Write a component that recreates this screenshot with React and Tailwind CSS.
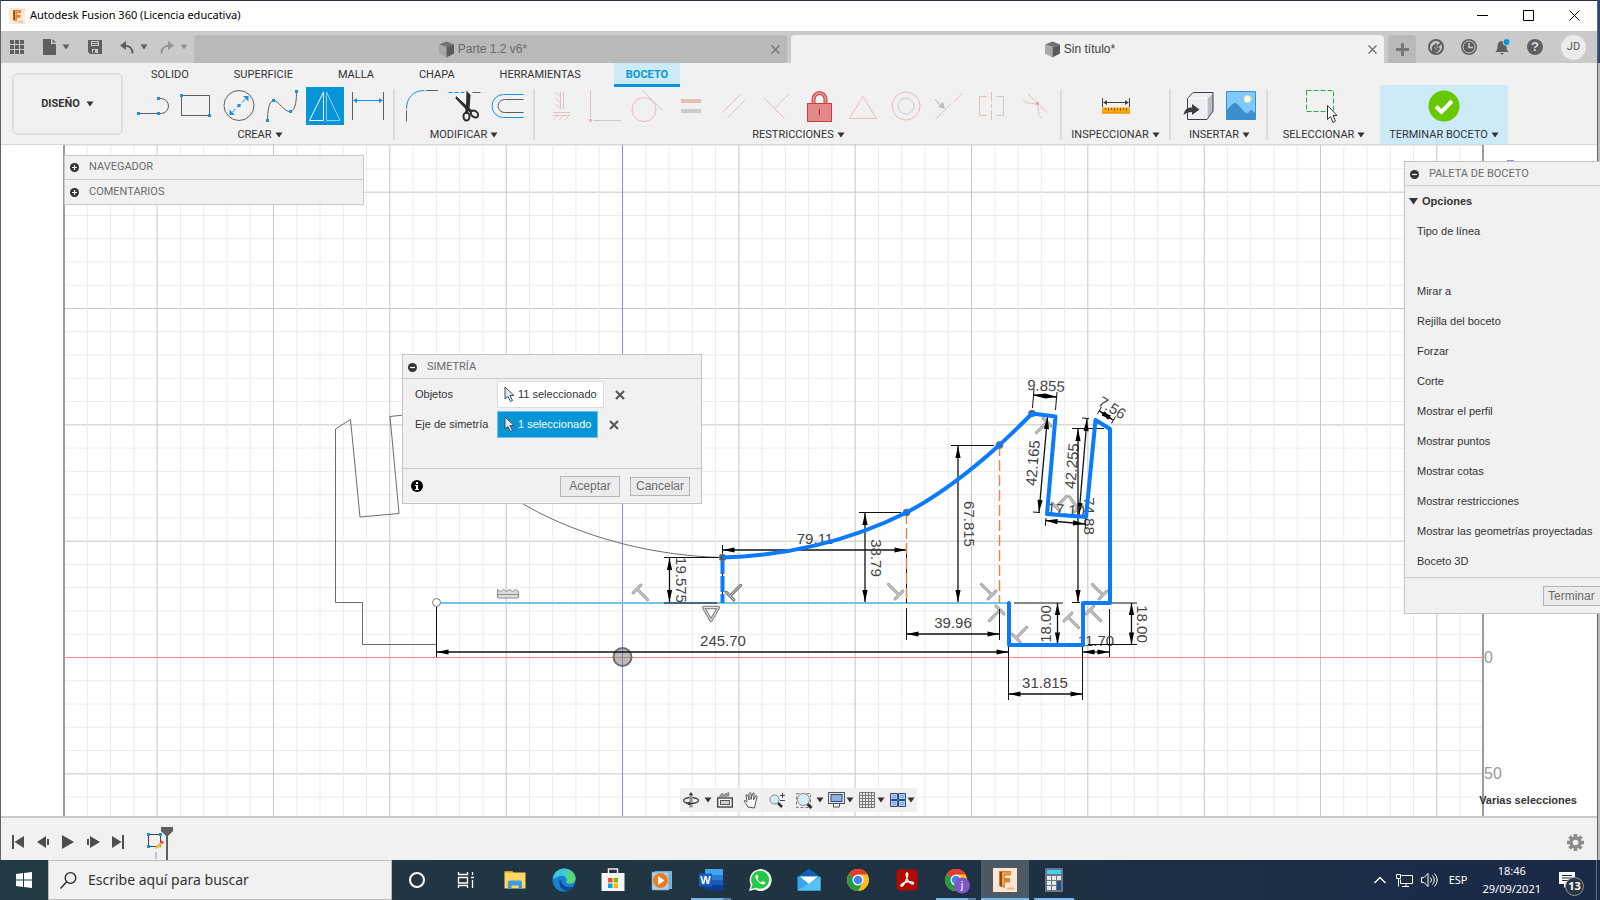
import { useState } from 'react';

const GRIS = '#5f5f5f';
const AZUL = '#1a8fe3';
const ROSA = '#e9bcbc';
const CLARO = '#cbcbcb';

function Caret({ className = 'text-[#333]' }) {
  return (
    <svg width="8" height="6" viewBox="0 0 8 6" className={`shrink-0 ${className}`}>
      <path d="M0.5 0.5h7L4 5.5z" fill="currentColor" />
    </svg>
  );
}

function Punto({ x, y }) {
  return <rect x={x - 1.5} y={y - 1.5} width="3" height="3" fill={AZUL} />;
}

/* ---------- Ribbon icons, all on a 38x38 box ---------- */

const ICONOS = {
  linea: (
    <>
      <path d="M4 26.5h20M24 11.5h3a7.5 7.5 0 0 1 0 15h-3" stroke={GRIS} />
      <Punto x={4.5} y={26.5} /><Punto x={24.5} y={26.5} /><Punto x={24.5} y={11.5} />
    </>
  ),
  rectangulo: (
    <>
      <rect x="4.5" y="8.5" width="28" height="20" stroke={GRIS} />
      <Punto x={4.5} y={8.5} /><Punto x={32.5} y={28.5} />
    </>
  ),
  circulo: (
    <>
      <circle cx="19" cy="18.5" r="15" stroke={GRIS} />
      <path d="M12 25.5l14-14" stroke={AZUL} strokeDasharray="5 2" />
      <path d="M28.5 9v5.5L23 9zM9.5 28v-5.5L15 28z" fill={AZUL} />
      <Punto x={19} y={18.5} />
    </>
  ),
  spline: (
    <>
      <path d="M4.5 33.5C4.5 24 6 14 10.5 13.5S22 26 27.5 24.5 33.5 12 33.5 4.5" stroke={GRIS} />
      <Punto x={4.5} y={33.5} /><Punto x={10.5} y={13.5} /><Punto x={27.5} y={24.5} /><Punto x={33.5} y={4.5} />
    </>
  ),
  simetria: (
    <>
      <path d="M17.5 5v28.500H3.5z" stroke="#fff" />
      <path d="M20.5 5v28.500H34z" stroke="#8fd0f5" />
    </>
  ),
  cota: (
    <>
      <path d="M3.5 5v28M34.5 5v28" stroke={GRIS} />
      <path d="M6 13.5h26" stroke={AZUL} />
      <path d="M4 13.5l4-2.5v5zM34 13.5l-4-2.5v5z" fill={AZUL} />
    </>
  ),
  empalme: (
    <>
      <path d="M4.5 22C4.5 11 11 3.5 22.5 3.5" stroke={AZUL} />
      <path d="M24 3.5h12M4.5 23.5v11" stroke={GRIS} />
    </>
  ),
  recortar: (
    <>
      <path d="M3.5 5.5h16" stroke={AZUL} strokeDasharray="4 2" />
      <path d="M27.5 5.5h8" stroke={GRIS} />
      <path d="M21.5 3.5l4 4.5-1 14-2 2-12-12.5.5-2.5 10 9z" fill="#2d2d2d" />
      <ellipse cx="21.5" cy="29.5" rx="3" ry="4" stroke="#2d2d2d" strokeWidth="2" />
      <ellipse cx="29.5" cy="27" rx="3" ry="4" stroke="#2d2d2d" strokeWidth="2" transform="rotate(-50 29.5 27)" />
      <path d="M22 21l-.5 6M23 22l4 3" stroke="#2d2d2d" strokeWidth="3" />
    </>
  ),
  desfase: (
    <>
      <path d="M35.5 7.5H15.5a11.5 11.5 0 0 0 0 23h20" stroke={AZUL} />
      <path d="M35.5 12.5H16.5a6.5 6.5 0 0 0 0 13h19" stroke={GRIS} />
    </>
  ),
  horizontalVertical: (
    <>
      <path d="M17.5 5v17M12.5 5l5 5M12.5 11l5 5M12.5 17l5 5M10 28.5h17M10.5 33l4.5-4.5M16 33l4.5-4.5M21.5 33l4.5-4.5" stroke={ROSA} />
      <path d="M20.5 5v17M10 25.5h17" stroke={CLARO} />
    </>
  ),
  coincidente: (
    <>
      <path d="M4.5 3v28" stroke={ROSA} />
      <rect x="3" y="32" width="3" height="3" fill={ROSA} />
      <path d="M7 33.5h28" stroke={CLARO} />
    </>
  ),
  tangente: (
    <>
      <circle cx="15" cy="22.5" r="12" stroke={ROSA} />
      <path d="M14 4l19.5 19.5" stroke={CLARO} />
    </>
  ),
  igual: (
    <>
      <path d="M9 12h20v4H9z" fill={ROSA} />
      <path d="M9 22h20v4H9z" fill={CLARO} />
    </>
  ),
  paralelo: (
    <>
      <path d="M7.5 25.5l18-18" stroke={ROSA} />
      <path d="M12.5 30.5l18-18" stroke={CLARO} />
    </>
  ),
  perpendicular: (
    <>
      <path d="M6.5 11.5l20 20" stroke={ROSA} />
      <path d="M16.5 21.5l15-15" stroke={CLARO} />
    </>
  ),
  fijar: (
    <>
      <path d="M12.5 17v-4.5a6 6.5 0 0 1 12 0V17" stroke="#cf3f3f" strokeWidth="4" />
      <path d="M12.5 17v-4.5a6 6.5 0 0 1 12 0V17" stroke="#e39292" strokeWidth="2" />
      <rect x="6.5" y="16.5" width="24" height="18" fill="#e08a8a" stroke="#d03c3c" />
      <path d="M18.5 22v6" stroke="#c31d1d" />
    </>
  ),
  puntoMedio: <path d="M19 9.5L32.5 31.5h-27z" stroke={ROSA} />,
  concentrico: (
    <>
      <circle cx="19" cy="19" r="14" stroke={ROSA} />
      <circle cx="19" cy="19" r="8" stroke={CLARO} />
    </>
  ),
  colineal: (
    <>
      <path d="M5.5 32.5l16-16" stroke={CLARO} />
      <path d="M24 14.5l8.5-8.5" stroke={ROSA} />
      <path d="M5 12.5l6 6" stroke={CLARO} strokeWidth="1.5" />
      <path d="M15 22l-7-2 5-5z" fill="#bdbdbd" />
    </>
  ),
  simetrico: (
    <>
      <path d="M13.5 9.5h-7v19h7" stroke={ROSA} />
      <path d="M23.5 9.5h7v19h-7" stroke={CLARO} />
      <path d="M18.5 5v10M18.5 17v4M18.5 23v10" stroke={ROSA} />
    </>
  ),
  curvatura: (
    <>
      <path d="M7 12.5c2 5 10 3 13.500 5s0 12 5 13" stroke={CLARO} />
      <path d="M12 7l19 18.5" stroke={ROSA} />
      <circle cx="21.5" cy="16.5" r="1.8" fill="#e7a5a5" />
    </>
  ),
  inspeccionar: (
    <>
      <path d="M5.5 11v9M32.5 11v9M8 15.5h22" stroke="#444" />
      <path d="M6 15.5l4-2.5v5zM32 15.5l-4-2.5v5z" fill="#444" />
      <path d="M5 20.5h28v6H5z" fill="#fba905" />
      <path d="M5 26h28" stroke="#dd8d00" />
      <path d="M8.5 21v2M11.5 21v3M14.5 21v2M17.5 21v3M20.5 21v2M23.5 21v3M26.5 21v2M29.5 21v3" stroke="#8d5a00" />
    </>
  ),
  insertar: (
    <>
      <path d="M8.5 11.5L14 5.5h20v18.5L28 32.5H8.5z" fill="#eceef2" />
      <path d="M28 11.5l6-6V24l-6 8z" fill="#b9bec9" />
      <path d="M8.5 11.5H28V32.5M28 11.5l6-6" stroke="#fff" />
      <path d="M34 5.5V24l-6 8.5H8.5v-21L14 5.5z" stroke="#3d3f44" />
      <path d="M4.5 28c1-5 3-7.5 8.5-7.5V17l7.5 5.5-7.5 5.5v-3c-4 0-6 1-8.500 3z" fill="#3c3d42" />
    </>
  ),
  imagen: (
    <>
      <path d="M4.5 4.5h29v28h-29z" fill="#80c8ff" stroke="#3b8fca" />
      <path d="M5 23c5-6 7-8 9.500-6.500S21 24 24 26s3-3 5-3 3 3 4 3v6H5z" fill="#3b8fca" />
      <circle cx="25.5" cy="12" r="3.5" fill="#fffbe0" stroke="#e9e5a8" />
    </>
  ),
  seleccionar: (
    <>
      <path d="M1.5 3.5h27v21h-27z" stroke="#1fb14c" strokeDasharray="5 2" />
      <path d="M22.5 18.5v14l3-3 2.500 6 2.500-1.500-2.500-5.500h4z" fill="#fff" stroke="#333" />
    </>
  ),
  terminar: (
    <>
      <circle cx="19" cy="19" r="15.5" fill="#66c801" />
      <path d="M11 19.5l5.5 5.5 10.5-11" stroke="#fff" strokeWidth="4" />
    </>
  ),
};

function Icono({ nombre }) {
  return (
    <svg width="38" height="38" viewBox="0 0 38 38" fill="none">
      {ICONOS[nombre]}
    </svg>
  );
}

const GRUPOS = [
  { label: 'CREAR', iconos: ['linea', 'rectangulo', 'circulo', 'spline', 'simetria', 'cota'], cls: 'w-[268px] pl-0.5' },
  { label: 'MODIFICAR', iconos: ['empalme', 'recortar', 'desfase'], cls: 'w-[138px]' },
  {
    label: 'RESTRICCIONES',
    iconos: ['horizontalVertical', 'coincidente', 'tangente', 'igual', 'paralelo', 'perpendicular', 'fijar',
      'puntoMedio', 'concentrico', 'colineal', 'simetrico', 'curvatura'],
    cls: 'w-[525px] pl-0.5',
  },
  { label: 'INSPECCIONAR', iconos: ['inspeccionar'], cls: 'w-[107px]' },
  { label: 'INSERTAR', iconos: ['insertar', 'imagen'], cls: 'w-[95px] pl-0.5' },
  { label: 'SELECCIONAR', iconos: ['seleccionar'], cls: 'w-[112px]' },
  { label: 'TERMINAR BOCETO', iconos: ['terminar'], cls: 'w-[128px] bg-[#cdeaf7]' },
];

const PESTANAS = ['SOLIDO', 'SUPERFICIE', 'MALLA', 'CHAPA', 'HERRAMIENTAS', 'BOCETO'];

function LogoFusion({ size }) {
  return (
    <svg width={size} height={size} viewBox="0 0 24 24">
      <rect width="24" height="24" fill="#fde6d3" />
      <path d="M6.5 3H18v4.500h-6V10h5v4.500h-5V20l-5.500-2z" fill="#d9822f" />
      <path d="M6.5 3l2.500 1.500V19l-2.500-1z" fill="#8f4a12" />
      <path d="M9 4.500h9v1.500h-7V18L9 17z" fill="#f0a45c" />
      <path d="M14 19.500h7v2h-7z" fill="#f5b27a" />
    </svg>
  );
}

function BarraTitulo() {
  return (
    <header className="flex h-[30px] shrink-0 items-center bg-white pb-px pl-2">
      <LogoFusion size={16} />
      <h1 className="ml-[5px] font-['Noto_Sans',sans-serif] text-[11px] text-black">Autodesk Fusion 360 (Licencia educativa)</h1>
      <div className="ml-auto flex h-full">
        <button aria-label="Minimizar" className="flex w-[46px] items-center justify-center">
          <svg width="11" height="11"><path d="M0 5.5h11" stroke="#000" /></svg>
        </button>
        <button aria-label="Maximizar" className="flex w-[46px] items-center justify-center">
          <svg width="11" height="11"><path d="M.5.5h10v10H.5z" fill="none" stroke="#000" /></svg>
        </button>
        <button aria-label="Cerrar" className="flex w-[46px] items-center justify-center">
          <svg width="11" height="11"><path d="M.5.5l10 10M10.5.5l-10 10" stroke="#000" /></svg>
        </button>
      </div>
    </header>
  );
}

function Cubo() {
  return (
    <svg width="17" height="17" viewBox="0 0 17 17" className="shrink-0">
      <path d="M1 3.5L8.5.5 16 3.5 8.5 6z" fill="#707070" />
      <path d="M1 3.5L8.5 6v10.5L1 12.5z" fill="#a8a8a8" />
      <path d="M16 3.5L8.5 6v10.5L16 12.5z" fill="#5b5b5b" />
    </svg>
  );
}

function Documento({ titulo, activo }) {
  return (
    <div className={`flex h-7 flex-1 items-center rounded-t-sm pr-[3px] pl-1 text-xs ${activo ? 'bg-[#f1f1f1] text-[#3c3c3c]' : 'mr-1 bg-[#b9b9b9] text-[#6a6a6a]'}`}>
      <div className="flex flex-1 items-center justify-center gap-[3px]">
        <Cubo />
        <span>{titulo}</span>
      </div>
      <button aria-label={`Cerrar ${titulo}`} className="p-1">
        <svg width="9" height="9"><path d="M.5.5l8 8M8.5.5l-8 8" stroke="#777" strokeWidth="1.5" /></svg>
      </button>
    </div>
  );
}

function BarraDocumentos() {
  return (
    <div className="flex h-8 shrink-0 items-end bg-[#cacaca]">
      <div className="flex h-full w-[193px] shrink-0 items-center text-[#5f5f5f]">
        <button aria-label="Panel de datos" className="ml-[9px]">
          <svg width="14" height="14" fill="currentColor">
            <path d="M0 0h4v4H0zM5 0h4v4H5zM10 0h4v4h-4zM0 5h4v4H0zM5 5h4v4H5zM10 5h4v4h-4zM0 10h4v4H0zM5 10h4v4H5zM10 10h4v4h-4z" />
          </svg>
        </button>
        <button aria-label="Archivo" className="ml-[19px] flex items-center gap-1.5">
          <svg width="13" height="16" fill="currentColor"><path d="M0 0h8v5h5v11H0zM9.5 0L13 3.5H9.5z" /></svg>
          <Caret className="text-[#5f5f5f]" />
        </button>
        <button aria-label="Guardar" className="ml-[18px]">
          <svg width="14" height="14" viewBox="0 0 14 14">
            <path d="M0 0h14v14H2l-2-2z" fill="#5f5f5f" />
            <path d="M3 1h8v5H3zM4 9h6v4H4z" fill="#cacaca" />
            <path d="M4 2.5h6M4 4.5h6" stroke="#5f5f5f" />
            <path d="M5 10h2v3H5z" fill="#5f5f5f" />
          </svg>
        </button>
        <button aria-label="Deshacer" className="ml-[18px] flex items-center gap-1.5">
          <svg width="14" height="13" viewBox="0 0 14 13">
            <path d="M3 4.5c5 0 9.500 1 9.500 8" fill="none" stroke="#5f5f5f" strokeWidth="2" />
            <path d="M0 4.5L6 0v9z" fill="#5f5f5f" />
          </svg>
          <Caret className="text-[#5f5f5f]" />
        </button>
        <button aria-label="Rehacer" className="ml-3 flex items-center gap-1.5">
          <svg width="14" height="13" viewBox="0 0 14 13">
            <path d="M11 4.5c-5 0-9.500 1-9.500 8" fill="none" stroke="#949494" strokeWidth="2" />
            <path d="M14 4.5L8 0v9z" fill="#949494" />
          </svg>
          <Caret className="text-[#949494]" />
        </button>
      </div>
      <Documento titulo="Parte 1.2 v6*" />
      <Documento titulo="Sin título*" activo />
      <div className="flex h-full w-[213px] shrink-0 items-center">
        <button aria-label="Nuevo documento" className="ml-1 flex h-7 w-7 items-center justify-center self-end rounded-t-sm bg-[#b9b9b9]">
          <svg width="13" height="13"><path d="M6.5 0v13M0 6.5h13" stroke="#777" strokeWidth="3" /></svg>
        </button>
        <button aria-label="Extensiones" className="ml-3">
          <svg width="16" height="16" viewBox="0 0 16 16" fill="none">
            <circle cx="8" cy="8" r="7" fill="#cacaca" stroke="#5f5f5f" strokeWidth="2" />
            <path d="M4 7.5L8 4l1.500 2L13 3l1 1.500-3 3 1 2.500-2 2.500-4 2c-2-1-2.500-3-2-7z" fill="#5f5f5f" />
            <path d="M6.5 8l2 2.500M8.5 6.5l2 2.500" stroke="#cacaca" />
          </svg>
        </button>
        <button aria-label="Estado de trabajos" className="ml-[17px]">
          <svg width="16" height="16" viewBox="0 0 16 16" fill="none">
            <circle cx="8" cy="8" r="8" fill="#5f5f5f" />
            <circle cx="8" cy="8" r="6" stroke="#cacaca" />
            <path d="M8 4v4.500h4" stroke="#cacaca" strokeWidth="1.5" />
          </svg>
        </button>
        <button aria-label="Notificaciones" className="ml-[17px]">
          <svg width="16" height="18" viewBox="0 0 16 18">
            <path d="M1 14c2-1 2.500-3 2.500-6S5 3 8 3s4.500 2 4.500 5 .5 5 2.500 6zM6 15h4l-2 2z" fill="#5f5f5f" />
            <circle cx="12.5" cy="4" r="3.5" fill="#0696d7" stroke="#cacaca" />
          </svg>
        </button>
        <button aria-label="Ayuda" className="ml-[17px] flex h-4 w-4 items-center justify-center rounded-full bg-[#5f5f5f] text-[13px] font-bold text-[#dcdcdc]">?</button>
        <button className="ml-[18px] flex h-[25px] w-[25px] items-center justify-center rounded-full bg-[#ebebeb] font-[Roboto,sans-serif] text-[11px] text-[#555]">JD</button>
      </div>
    </div>
  );
}

function Cinta() {
  const [pestana, setPestana] = useState('BOCETO');
  return (
    <div className="flex h-[82px] shrink-0 overflow-hidden border-b border-[#d6d6d6] bg-[#f1f1f1] font-[Roboto,sans-serif] text-[11px] text-[#333]">
      <button className="mt-2.5 ml-[11px] flex h-[62px] w-[111px] shrink-0 items-center justify-center gap-1.5 rounded-md border-2 border-[#dedede] font-bold">
        DISEÑO <Caret />
      </button>
      <div className="ml-[2px] flex flex-1 flex-col">
        <nav className="flex h-6 shrink-0 gap-[21px] pl-3.5">
          {PESTANAS.map(p => (
            <button
              key={p}
              onClick={() => setPestana(p)}
              className={p === pestana
                ? 'z-10 border-b-[3px] border-[#0696d7] bg-[#cdeaf7] px-3 pt-[3px] font-bold text-[#0696d7]'
                : 'border-b-[3px] border-transparent px-3 pt-[3px]'}
            >
              {p}
            </button>
          ))}
        </nav>
        <div className="-mt-0.5 flex h-[59px]">
          {GRUPOS.map((g, i) => (
            <div key={g.label} className="flex shrink-0">
              <div className={`flex flex-col items-center pt-0.5 ${g.cls}`}>
                <div className="flex gap-[5px]">
                  {g.iconos.map(n => (
                    <button key={n} aria-label={n} className={n === 'simetria' ? 'bg-[#0696d7]' : ''}>
                      <Icono nombre={n} />
                    </button>
                  ))}
                </div>
                <button className="mt-px flex h-5 items-center gap-[3px] whitespace-nowrap">
                  {g.label} <Caret />
                </button>
              </div>
              {i < 5 && <div className="my-1 w-0.5 bg-[#dddddd]" />}
            </div>
          ))}
        </div>
      </div>
    </div>
  );
}

/* ---------- Sketch canvas ---------- */

const PASO = 23.267;
const ORIGEN = { x: 622.5, y: 657.5 };

function Rejilla() {
  const verticales = Array.from({ length: 60 }, (_, i) => i - 23);
  const horizontales = Array.from({ length: 30 }, (_, i) => i - 22);
  const color = i => (i % 5 === 0 ? '#c6c6c6' : '#ebebeb');
  const orden = (a, b) => (a % 5 === 0) - (b % 5 === 0);
  return (
    <g>
      {horizontales.sort(orden).map(i => (
        <path key={`h${i}`} d={`M64 ${ORIGEN.y + i * PASO}H1483`} stroke={color(i)} />
      ))}
      {verticales.sort(orden).map(i => (
        <path key={`v${i}`} d={`M${ORIGEN.x + i * PASO} 145V830`} stroke={color(i)} />
      ))}
      <path d="M64 145V830M1483 145V830" stroke="#9b9b9b" strokeWidth="2" />
      <path d="M64 657.5H1483" stroke="#f08a8a" />
      <path d="M622.5 145V830" stroke="#8b8bf5" />
    </g>
  );
}

// dimension line with an arrowhead at both ends
function Flecha({ a, b }) {
  const ang = Math.atan2(b[1] - a[1], b[0] - a[0]) * 180 / Math.PI;
  return (
    <g>
      <path d={`M${a[0]} ${a[1]}L${b[0]} ${b[1]}`} stroke="#111" strokeWidth="1.3" />
      <path d="M0 0l12-2.6v5.2z" fill="#000" transform={`translate(${a[0]} ${a[1]}) rotate(${ang})`} />
      <path d="M0 0l-12-2.6v5.2z" fill="#000" transform={`translate(${b[0]} ${b[1]}) rotate(${ang})`} />
    </g>
  );
}

const COTAS = [
  { t: '19.575', x: 681, y: 580, r: 90, a: [669.5, 558], b: [669.5, 602], ext: 'M664 557.5H722M664 603H717' },
  { t: '79.11', x: 815, y: 539, r: 0, a: [722.5, 550], b: [906.5, 550], ext: 'M722.5 545v58M906.5 545v58' },
  { t: '38.79', x: 876, y: 558, r: 90, a: [865, 513], b: [865, 602], ext: 'M859 512.5h42' },
  { t: '67.815', x: 969, y: 524, r: 90, a: [958, 446], b: [958, 602], ext: 'M951 445.5h43' },
  { t: '39.96', x: 953, y: 623, r: 0, a: [906.5, 634], b: [999.5, 634], ext: 'M906.5 608v32M999.5 609v31' },
  { t: '245.70', x: 723, y: 641, r: 0, a: [436.5, 652], b: [1008.5, 652], ext: 'M436.5 607v50' },
  { t: '31.815', x: 1045, y: 683, r: 0, a: [1008.5, 694], b: [1082.5, 694], ext: 'M1008.5 645v55M1082.5 645v55' },
  { t: '11.70', x: 1096, y: 641, r: 0, a: [1082.5, 652], b: [1109.5, 652], ext: 'M1109.5 609v48' },
  { t: '18.00', x: 1142, y: 624, r: 90, a: [1131.5, 603], b: [1131.5, 644.5], ext: 'M1110 603h27M1088 644.5h49' },
  { t: '18.00', x: 1046, y: 624, r: -90, a: [1057.5, 603], b: [1057.5, 644.5], ext: 'M1014 603h49' },
  { t: '9.855', x: 1046, y: 386, r: 3, a: [1033, 395], b: [1057, 397], ext: 'M1032.5 408l1.5-19M1055.5 410l1.5-18' },
  { t: '7.56', x: 1112, y: 408, r: 31, a: [1099.5, 411], b: [1113, 420], ext: 'M1097.5 414l4-7M1111.5 423.5l4-7' },
  { t: '42.165', x: 1033, y: 463, r: -85, a: [1047.5, 417], b: [1039, 512], ext: 'M1033 512l7 .6' },
  { t: '42.255', x: 1072, y: 466, r: -85, a: [1087, 419], b: [1079, 515], ext: 'M1082 418l7 .6' },
  { t: '74.88', x: 1089, y: 516, r: 90, a: [1078, 429], b: [1078, 602], ext: 'M1072 428.5h32M1072 602.5h8' },
  { t: '17.10', x: 1066, y: 510, r: 5, a: [1045.5, 520.5], b: [1085, 524], ext: 'M1046 518l-.7 8M1086 518l-.8 10' },
];

// perpendicular marks: bar position, rotation of the stem
const PERPENDICULARES = [
  [637, 589, -45], [899, 595, 135], [992, 595, 135], [1000, 610, 45], [1016, 638, -135],
  [1068, 617, -45], [1103, 595, 135], [1090, 610, -45], [1047, 422, 45], [1056, 507, -135], [1078, 509, 145],
];

function MarcaPerpendicular({ x, y, r, color = '#9f9f9f' }) {
  const d = 'M-5.5 0h11M0 0v15';
  return (
    <g transform={`translate(${x} ${y}) rotate(${r})`} strokeLinecap="round">
      <path d={d} stroke={color} strokeWidth="3" />
      <path d={d} stroke="#cfcfcf" strokeWidth="1" />
    </g>
  );
}

const CURVA = 'M722.5 557.5C785 556 850 541 906.5 512.5C944 493 975 467 999.5 445C1011 434 1022 424 1032 413.5';

function Boceto() {
  return (
    <svg className="absolute inset-0 h-full w-full" fill="none">
      {/* sketch coordinates are measured from the top of the window */}
      <g transform="translate(-1 -145)">
        <Rejilla />
        <circle cx="622.5" cy="657" r="9" fill="#777" fillOpacity=".5" stroke="#6e6e6e" strokeWidth="2" />

        {/* mirrored preview */}
        <g stroke="#6c6c6c">
          <path d="M436.5 644.5h-74v-42h-27V429l15-9.5 9.5 97.5 39-3.5-9-97 23-2.5" />
          <path d={CURVA} transform="matrix(-1 0 0 1 1445 0)" />
        </g>

        <path d="M436.5 603H1009" stroke="#74c3e8" strokeWidth="2" />

        {PERPENDICULARES.map(([x, y, r]) => <MarcaPerpendicular key={`${x}-${y}`} x={x} y={y} r={r} />)}
        <MarcaPerpendicular x={730} y={596} r={-135} color="#6d6d6d" />

        {COTAS.map((c, i) => (
          <g key={i}>
            <path d={c.ext} stroke="#111" />
            <Flecha a={c.a} b={c.b} />
            <text
              textAnchor="middle"
              transform={`translate(${c.x} ${c.y}) rotate(${c.r})`}
              y="5"
              fill="#444"
              className="text-[15px]"
            >
              {c.t}
            </text>
          </g>
        ))}

        <path d="M906.5 513V603M999.5 445V603" stroke="#e0894a" strokeDasharray="11 4" strokeWidth="1.5" />
        <path d="M722.5 558V603" stroke="#0a7bff" strokeWidth="4" strokeDasharray="16 2" />

        <path d="M703.5 607.5h15l-7.5 13z" stroke="#8d8d8d" strokeWidth="3.5" strokeLinejoin="round" />
        <path d="M703.5 607.5h15l-7.5 13z" stroke="#e8e8e8" strokeLinejoin="round" />
        <path d="M497.5 589.5l3 2 3-2 3 2 3-2 3 2 3-2 3 2v6.500h-21z" fill="#ddd" stroke="#8d8d8d" />
        <path d="M498 594.5h21" stroke="#8d8d8d" />

        <g fill="#555" stroke="#8a8a8a">
          <circle cx="722.5" cy="557.5" r="3.5" />
          <circle cx="906.5" cy="512.5" r="3.5" />
          <circle cx="999.5" cy="445" r="3.5" />
          <circle cx="1032" cy="413.5" r="3.5" />
        </g>
        <circle cx="436.5" cy="602.5" r="4" fill="#fff" stroke="#777" />

        <path d={CURVA} stroke="#0a7bff" strokeWidth="4" />
        <path
          d="M1032 413.5l23.5 3-8.5 97.5 39 3 9.5-97 14.5 9v174h-27V645h-74v-42"
          stroke="#0a7bff"
          strokeWidth="4"
          strokeLinejoin="round"
          strokeLinecap="round"
        />

        <g fill="#999" className="text-[16px]">
          <text x="1484" y="663">0</text>
          <text x="1484" y="779">50</text>
        </g>
        <path d="M1507 161h7" stroke="#8b8bf5" strokeWidth="2" />
      </g>
    </svg>
  );
}

function Circulito({ mas }) {
  return (
    <svg width="9" height="9" viewBox="0 0 9 9" className="shrink-0">
      <circle cx="4.5" cy="4.5" r="4.5" fill="#333" />
      <path d={mas ? 'M2 4.5h5M4.5 2v5' : 'M2 4.5h5'} stroke="#fff" strokeWidth="1.2" />
    </svg>
  );
}

function Navegador() {
  return (
    <aside className="absolute top-[10px] left-[63px] w-[300px] border border-[#c9c9c9] bg-[#f1f1f1] font-[Roboto,sans-serif] text-[11px] text-[#6b6b6b]">
      {['NAVEGADOR', 'COMENTARIOS'].map((t, i) => (
        <button key={t} className={`flex w-full items-center gap-2.5 pl-[5px] ${i ? 'h-[25px] border-t border-[#c9c9c9]' : 'h-[23px]'}`}>
          <Circulito mas />
          <span>{t}</span>
        </button>
      ))}
    </aside>
  );
}

function Seleccion({ texto, activa }) {
  return (
    <div className="flex items-center gap-[11px]">
      <button className={`flex h-[27px] items-center gap-[3px] border px-1.5 ${activa ? 'border-[#6cc1ea] bg-[#0696d7] text-white' : 'border-[#dcdcdc] bg-white'}`}>
        <svg width="11" height="17" viewBox="0 0 11 17">
          <path d="M1 1v12l3-2.5 2.5 5 2-1-2.5-5H10z" fill="#e3e7ee" stroke="#4a4d55" />
        </svg>
        {texto}
      </button>
      <button aria-label="Quitar">
        <svg width="10" height="10"><path d="M1 1l8 8M9 1L1 9" stroke="#5a5a5a" strokeWidth="2.2" /></svg>
      </button>
    </div>
  );
}

function Simetria() {
  return (
    <section className="absolute top-[209px] left-[401px] w-[300px] border border-[#c4c4c4] bg-[#f1f1f1] text-[11px] text-[#333]">
      <h2 className="flex h-6 items-center gap-2.5 border-b border-[#c9c9c9] pt-px pl-[5px] font-[Roboto,sans-serif] text-[#6b6b6b]">
        <Circulito /> SIMETRÍA
      </h2>
      <div className="grid h-[89px] grid-cols-[82px_1fr] content-start items-center gap-y-[3px] pt-0.5 pl-3">
        <span>Objetos</span>
        <Seleccion texto="11 seleccionado" />
        <span className="whitespace-nowrap">Eje de simetría</span>
        <Seleccion texto="1 seleccionado" activa />
      </div>
      <footer className="flex h-[35px] items-center gap-2.5 border-t border-[#c9c9c9] pr-[11px] pl-2">
        <svg width="12" height="12" viewBox="0 0 12 12" className="mr-auto">
          <circle cx="6" cy="6" r="6" fill="#000" />
          <path d="M5 2h2v2H5zM4 5h3v4h1v1H4V9h1V6H4z" fill="#fff" />
        </svg>
        <button className="h-[21px] w-[60px] border border-[#b5b5b5] bg-[#ebebeb] text-xs leading-none text-[#6b6b6b]">Aceptar</button>
        <button className="h-[19px] w-[60px] border border-[#b5b5b5] bg-[#ebebeb] text-xs leading-none text-[#6b6b6b]">Cancelar</button>
      </footer>
    </section>
  );
}

const OPCIONES = [
  'Mirar a', 'Rejilla del boceto', 'Forzar', 'Corte', 'Mostrar el perfil', 'Mostrar puntos', 'Mostrar cotas',
  'Mostrar restricciones', 'Mostrar las geometrías proyectadas', 'Boceto 3D',
];

function Paleta() {
  return (
    <aside className="absolute top-[16px] -right-[3px] w-[196px] overflow-hidden border-y border-l border-[#c4c4c4] bg-[#f1f1f1] text-[11px] text-[#333]">
      <h2 className="flex h-6 items-center gap-2.5 border-b border-[#c9c9c9] pt-px pl-[5px] font-[Roboto,sans-serif] text-[#6b6b6b]">
        <Circulito /> PALETA DE BOCETO
      </h2>
      <button className="flex h-[30px] items-center gap-1 pl-1 font-bold">
        <svg width="9" height="7"><path d="M0 0h9L4.500 6.500z" fill="#333" /></svg>
        Opciones
      </button>
      <ul className="pb-px pl-3">
        <li className="mb-[30px] flex h-[30px] items-center">Tipo de línea</li>
        {OPCIONES.map(o => (
          <li key={o} className="flex h-[30px] items-center whitespace-nowrap">{o}</li>
        ))}
      </ul>
      <footer className="flex h-9 items-center justify-end border-t border-[#c9c9c9]">
        <button className="-mr-1 h-5 w-[61px] border border-[#b5b5b5] bg-[#ebebeb] pl-1 text-left text-xs leading-none text-[#6b6b6b]">Terminar</button>
      </footer>
    </aside>
  );
}

function BarraNavegacion() {
  return (
    <div className="absolute bottom-1 left-1/2 -ml-[119px] flex h-6 w-[237px] items-center bg-[#f0f0f0] pl-[3px]">
      <button aria-label="Orbitar" className="flex items-center gap-[5px]">
        <svg width="16" height="16" viewBox="0 0 16 16" fill="none">
          <ellipse cx="8" cy="8.5" rx="7.5" ry="3" stroke="#444" strokeWidth="1.3" />
          <path d="M6.5 3h3v13h-3z" fill="#f0f0f0" stroke="#888" strokeWidth=".5" />
          <path d="M8 0l2 3H6zM3 11.5l4-2v4z" fill="#333" />
          <path d="M8 3v12M5 11.5h6" stroke="#333" />
        </svg>
        <Caret />
      </button>
      <button aria-label="Mirar a" className="ml-[5px]">
        <svg width="16" height="16" viewBox="0 0 16 16" fill="none">
          <rect x=".7" y="6" width="14.6" height="9" fill="#fafafa" stroke="#444" strokeWidth="1.4" />
          <rect x="3.5" y="8.5" width="9" height="4" fill="#cdd2da" stroke="#555" />
          <path d="M2 5l3-4 1.5 1.5L12 .5V4z" fill="#999" stroke="#666" strokeWidth=".5" />
        </svg>
      </button>
      <button aria-label="Encuadre" className="ml-2.5">
        <svg width="17" height="17" viewBox="0 0 17 17">
          <path d="M5 15c-1-3-3-4-4-6 1-1 2 0 3 1L3 3c1-1 1.8 0 2 1l1 4V1.500C6.500.5 8 .5 8 1.500V7.500l1.500-6c.5-1 1.800-.5 1.700.5L10.500 8l2-4c.7-.8 1.700-.2 1.500.7L12.500 11l-1 5z" fill="#fff" stroke="#555" />
        </svg>
      </button>
      <button aria-label="Zoom" className="ml-[9px]">
        <svg width="17" height="17" viewBox="0 0 17 17" fill="none">
          <circle cx="5.5" cy="7.5" r="4.5" fill="#d8edf2" stroke="#888" />
          <path d="M9 11l4 4" stroke="#333" strokeWidth="2.5" />
          <path d="M13.5 1v5M11 3.5h5M11 8.5h5" stroke="#444" />
        </svg>
      </button>
      <button aria-label="Ventana de zoom" className="ml-[9px] flex items-center gap-[3px]">
        <svg width="18" height="17" viewBox="0 0 18 17" fill="none">
          <path d="M1.5 1.5h14v14h-14z" stroke="#777" strokeDasharray="3 2" />
          <circle cx="8.5" cy="7.5" r="6" fill="#d8edf2" stroke="#888" />
          <path d="M12.5 12l4 4" stroke="#333" strokeWidth="3" />
        </svg>
        <Caret />
      </button>
      <button aria-label="Visualización" className="ml-1 flex items-center gap-px">
        <svg width="17" height="16" viewBox="0 0 17 16" fill="none">
          <rect x=".5" y=".5" width="16" height="11" fill="#e2e5ea" stroke="#555" />
          <rect x="3" y="2.5" width="11" height="7" fill="#8fb1dd" stroke="#2c4c80" />
          <path d="M5.5 12v3h6v-3" stroke="#555" />
        </svg>
        <Caret />
      </button>
      <button aria-label="Rejilla" className="ml-[5px] flex items-center gap-0.5">
        <svg width="16" height="16" viewBox="0 0 16 16" fill="none">
          <path d="M.5.5h15v15H.5z" fill="#e8e8ec" />
          <path d="M.5.5h15v15H.5zM.5 3.5h15M.5 6.5h15M.5 9.5h15M.5 12.5h15M3.5.5v15M6.5.5v15M9.5.5v15M12.5.5v15" stroke="#777" />
        </svg>
        <Caret />
      </button>
      <button aria-label="Ventanas gráficas" className="ml-[5px] flex items-center gap-px">
        <svg width="16" height="14" viewBox="0 0 16 14" fill="none">
          <path d="M.5.5h7v6h-7zM8.5.5h7v6h-7zM.5 7.5h7v6h-7zM8.5 7.5h7v6h-7z" fill="#b9cde9" stroke="#2c4c80" />
          <path d="M2.5 2.5h3v2h-3zM10.5 2.5h3v2h-3zM2.5 9.5h3v2h-3zM10.5 9.5h3v2h-3z" stroke="#86a6d3" />
        </svg>
        <Caret />
      </button>
    </div>
  );
}

const REPRODUCCION = [
  ['Inicio', 'M0 0h2v14H0zM12 1v12L2.500 7z'],
  ['Atrás', 'M9 1v12L0 7zM10 4h2v6h-2z'],
  ['Reproducir', 'M0 0l12 7-12 7z'],
  ['Adelante', 'M3 1l10 6-10 6zM0 4h2v6H0z'],
  ['Final', 'M0 1l9.500 6L0 13zM10 0h2v14h-2z'],
];

function LineaTiempo() {
  return (
    <div className="flex h-[44px] shrink-0 items-center border-t-2 border-[#c9c9c9] bg-[#f1f1f1] pr-[13px] pl-[11px]">
      <div className="mt-1.5 flex gap-[13px]">
        {REPRODUCCION.map(([nombre, d]) => (
          <button key={nombre} aria-label={nombre}>
            <svg width="12" height="14" className="overflow-visible" fill="#4d4d4d"><path d={d} /></svg>
          </button>
        ))}
      </div>
      <svg width="30" height="34" viewBox="0 0 30 34" className="ml-[21px] self-end" fill="none">
        <path d="M3.5 8.5h12v12h-12z" stroke="#444" />
        <Punto x={3.5} y={8.5} /><Punto x={15.5} y={8.5} /><Punto x={3.5} y={20.5} />
        <path d="M10 23l1-3 5-4 2 2-5 4z" fill="#f9b53c" />
        <path d="M15 16l2-1.5 2 1.5-1.5 2z" fill="#e44" />
        <path d="M11 26v7" stroke="#c4c4c4" strokeWidth="2" />
        <path d="M16 1h12v4l-5 5h-2l-5-5z" fill="#5f5f5f" />
        <path d="M22 5v29" stroke="#5f5f5f" strokeWidth="2" />
      </svg>
      <button aria-label="Configuración" className="mt-1.5 ml-auto">
        <svg width="17" height="17" viewBox="-8.5 -8.5 17 17">
          {[0, 45, 90, 135].map(r => (
            <rect key={r} x="-1.8" y="-8.5" width="3.6" height="17" fill="#8c8c8c" transform={`rotate(${r})`} />
          ))}
          <circle r="6" fill="#8c8c8c" />
          <circle r="2.8" fill="#f1f1f1" />
        </svg>
      </button>
    </div>
  );
}

/* ---------- Windows taskbar ---------- */

function Chrome() {
  return (
    <>
      <circle cx="12" cy="12" r="11" fill="#fbc116" />
      <path d="M12 12L2.500 6.500A11 11 0 0 1 21.500 6.500H12z" fill="#e33b2e" />
      <path d="M12 12L2.500 6.500A11 11 0 0 0 12 23l5-8.500z" fill="#279847" />
      <circle cx="12" cy="12" r="5.5" fill="#fff" />
      <circle cx="12" cy="12" r="4.3" fill="#4285f4" />
    </>
  );
}

const APPS = [
  { n: 'Cortana', svg: <circle cx="12" cy="12" r="7" fill="none" stroke="#fff" strokeWidth="2" /> },
  {
    n: 'Vista de tareas',
    svg: <path d="M4.5 4v2.500h9V4M4.5 9.5h9v5.500h-9zM4.5 20v-2.500h9V20M18.5 4v3M18.5 12v8M17 9.5h3" fill="none" stroke="#fff" strokeWidth="1.3" />,
  },
  {
    n: 'Explorador de archivos',
    svg: (
      <>
        <path d="M1.5 3h8l2 2.500h-10z" fill="#d99a11" />
        <path d="M1.5 4.500h21v16h-21z" fill="#fdd663" />
        <path d="M5 21v-6.500q0-2 2-2h10q2 0 2 2V21h-3.500v-3.500h-7V21z" fill="#3f9ae0" />
      </>
    ),
  },
  {
    n: 'Edge',
    svg: (
      <>
        <circle cx="12" cy="12" r="11.5" fill="#1681d6" />
        <path d="M1 11C2 4 7 .5 12 .5c7 0 11.500 5 11.500 9.500 0 4-3 5.500-6 5.500-2.500 0-3.500-1-3-2 2-4-3-6.500-6.500-5.500-3 .7-5 2-7 3z" fill="#3ccbd6" />
        <path d="M16 2c5 2 7.500 5 7.500 8.500 0 3.500-3 5-6 5-2.500 0-3.500-1-3-2 1-2 .5-4-1-5z" fill="#58d878" />
        <path d="M8 11c-2 4 0 10 6 12 3 0 6-2 7.500-4.500-5 2-11 .5-13.500-7.500z" fill="#114a8b" />
      </>
    ),
  },
  {
    n: 'Store',
    svg: (
      <>
        <path d="M7.500 6V1h9v5" fill="none" stroke="#eee" strokeWidth="1.5" />
        <path d="M.5 5h23v18H.5z" fill="#f5f5f5" />
        <path d="M7 10h4.500v4.500H7z" fill="#f25022" />
        <path d="M12.500 10H17v4.500h-4.500z" fill="#7fba00" />
        <path d="M7 15.500h4.500V20H7z" fill="#00a4ef" />
        <path d="M12.500 15.500H17V20h-4.500z" fill="#ffb900" />
      </>
    ),
  },
  {
    n: 'Reproductor',
    svg: (
      <>
        <path d="M5 3h17v18H5z" fill="#79b4d8" />
        <path d="M2 4h17v18H2z" fill="#a9d3ec" stroke="#5f9cc4" strokeWidth=".6" />
        <circle cx="10.5" cy="12.5" r="7.5" fill="#ef7b20" />
        <path d="M8 8l6.500 4.500L8 17z" fill="#fff" />
      </>
    ),
  },
  {
    n: 'Word',
    linea: 'partida',
    svg: (
      <>
        <path d="M6 1h18v6H6z" fill="#41a5ee" />
        <path d="M6 7h18v5H6z" fill="#2b7cd3" />
        <path d="M6 12h18v5H6z" fill="#185abd" />
        <path d="M6 17h18v5.500H6z" fill="#103f91" />
        <path d="M0 5.500h13v13H0z" fill="#185abd" />
        <text x="6.5" y="16" textAnchor="middle" fill="#fff" className="text-[11px] font-bold">W</text>
      </>
    ),
  },
  {
    n: 'WhatsApp',
    svg: (
      <>
        <path d="M1 23l1.800-6A11 11 0 1 1 7 21.500z" fill="#fff" />
        <path d="M3 21l1.500-4.500A9 9 0 1 1 8 19.700z" fill="#25c747" />
        <path d="M8.500 6.500c-2 1-1.500 4 1.500 7s6 4 7.500 1.500c0-1-2.500-2-3-2l-1.500 1.500c-1.500-.5-3-2-3.500-3.500L10.500 9.500c0-1-1-3-2-3z" fill="#fff" />
      </>
    ),
  },
  {
    n: 'Correo',
    svg: (
      <>
        <path d="M.5 9L12 .5 23.500 9z" fill="#0b62b8" />
        <path d="M.5 8.500h23v14H.5z" fill="#34a8ea" />
        <path d="M3 8.500h18L12 16z" fill="#fff" />
        <path d="M.5 22.500L23.500 9v13.500z" fill="#58c2f5" />
      </>
    ),
  },
  { n: 'Chrome', svg: <Chrome /> },
  {
    n: 'Acrobat',
    svg: (
      <>
        <rect x="1.5" y="1.5" width="21" height="21" rx="4" fill="#b30b00" />
        <path d="M12 5c-1.500 0-.5 5 1 7.500S18 17 18.500 15.500 14 13 11 14s-6 3-5 4 3.500-2 5-5.500S13.500 5 12 5z" fill="none" stroke="#fff" strokeWidth="1.4" />
      </>
    ),
  },
  {
    n: 'Chrome (j)',
    linea: 'partida',
    svg: (
      <>
        <Chrome />
        <circle cx="18" cy="17.5" r="8" fill="#7e57c2" />
        <text x="18" y="21" textAnchor="middle" fill="#fff" className="text-[11px]">j</text>
      </>
    ),
  },
  { n: 'Fusion 360', linea: 'activa', svg: null },
  {
    n: 'Calculadora',
    linea: 'normal',
    svg: (
      <>
        <rect x="3" y="0" width="18" height="24" rx="1" fill="#6b7680" />
        <path d="M5 2h14v4H5z" fill="#3fd0f5" />
        <path d="M5 8h4v4H5zM10 8h4v4h-4zM15 8h4v4h-4zM5 13h4v4H5zM10 13h4v4h-4zM5 18h4v4H5zM10 18h4v4h-4z" fill="#e5e8ea" />
        <path d="M15 13h4v9h-4z" fill="#1d4f91" />
      </>
    ),
  },
];

const LINEAS = {
  activa: <span className="absolute inset-x-0 bottom-0 h-0.5 bg-[#76b9ed]" />,
  normal: <span className="absolute inset-x-1 bottom-0 h-0.5 bg-[#76b9ed]" />,
  partida: <span className="absolute inset-x-1 bottom-0 h-0.5 border-r-8 border-[#5581ab] bg-[#76b9ed]" />,
};

function BarraTareas() {
  return (
    <footer className="flex h-10 shrink-0 bg-linear-to-r from-[#233a43] via-[#203342] to-[#1a2947] font-['Noto_Sans',sans-serif] text-white">
      <button aria-label="Inicio" className="flex w-12 items-center justify-center">
        <svg width="16" height="16"><path d="M0 2l7-1v6.500H0zM8 1l8-1v7.500H8zM0 8.500h7V15l-7-1zM8 8.500h8V16l-8-1z" fill="#fff" /></svg>
      </button>
      <label className="flex w-[344px] items-center gap-[11px] border border-[#bdbdbd] bg-[#f1f1f1] pl-[11px]">
        <svg width="17" height="17" fill="none" stroke="#222" strokeWidth="1.3">
          <circle cx="10.5" cy="6" r="5.3" /><path d="M6.500 10L.5 16.500" />
        </svg>
        <input type="text" placeholder="Escribe aquí para buscar" className="flex-1 bg-transparent text-sm outline-none placeholder:text-[#333]" />
      </label>
      <div className="flex gap-px pl-px">
        {APPS.map(a => (
          <button key={a.n} aria-label={a.n} className={`relative flex w-12 items-center justify-center ${a.linea === 'activa' ? 'bg-[#4c5a66]' : ''}`}>
            {a.svg
              ? <svg width="24" height="24" viewBox="0 0 24 24" className="overflow-visible font-['Liberation_Sans',sans-serif]">{a.svg}</svg>
              : <LogoFusion size={24} />}
            {LINEAS[a.linea]}
          </button>
        ))}
      </div>
      <div className="ml-auto flex items-center text-[11px]">
        <button aria-label="Mostrar iconos ocultos">
          <svg width="12" height="8" fill="none"><path d="M.5 7L6 1.500 11.500 7" stroke="#fff" strokeWidth="1.3" /></svg>
        </button>
        <svg width="17" height="15" className="ml-2.5" fill="none" stroke="#fff">
          <path d="M5.500 2.500h11v8H4.500v-4M10 10.500v3M6 13.500h7M.5 1.500h4v4h-4zM2.500 5.500v8" />
        </svg>
        <svg width="17" height="14" className="ml-2" fill="none" stroke="#fff">
          <path d="M.5 4.500H3l4-4v13l-4-4H.5zM9.500 4.500q2 2.500 0 5M11.500 2.500q3.500 4.500 0 9M13.500.5q5.500 6.500 0 13" />
        </svg>
        <button className="ml-[11px] text-[11px]">ESP</button>
        <time className="ml-[15px] text-center text-[11px] leading-[18px] whitespace-nowrap">18:46<br />29/09/2021</time>
        <button aria-label="Notificaciones" className="relative ml-[18px] h-4 w-4">
          <svg width="16" height="16"><path d="M0 0h16v12h-7l-4 4v-4H0z" fill="#fff" /><path d="M3 3.500h10M3 6h10M3 8.500h10" stroke="#1b2a46" /></svg>
          <span className="absolute top-[5px] left-[6px] flex h-[19px] w-[19px] items-center justify-center rounded-full border border-[#8d949e] bg-[#2c3440] font-bold">13</span>
        </button>
        <span className="mr-[3px] ml-[21px] h-10 w-px bg-[#65718a]" />
      </div>
    </footer>
  );
}

export default function App() {
  return (
    <div className="flex min-h-screen flex-col overflow-hidden bg-linear-to-b from-[#24497f] from-7% to-[#bcbcbc] to-7% font-['Liberation_Sans',Arial,sans-serif]">
      <div className="mr-[2px] flex flex-1 flex-col border-x border-t border-[#5d6470] border-t-[#26304d]">
        <BarraTitulo />
        <BarraDocumentos />
        <Cinta />
        <main className="relative flex-1 bg-white">
          <Boceto />
          <Navegador />
          <Simetria />
          <Paleta />
          <BarraNavegacion />
          <p className="absolute right-5 bottom-2 text-[11px] font-bold text-[#333]">Varias selecciones</p>
        </main>
        <LineaTiempo />
      </div>
      <BarraTareas />
    </div>
  );
}
